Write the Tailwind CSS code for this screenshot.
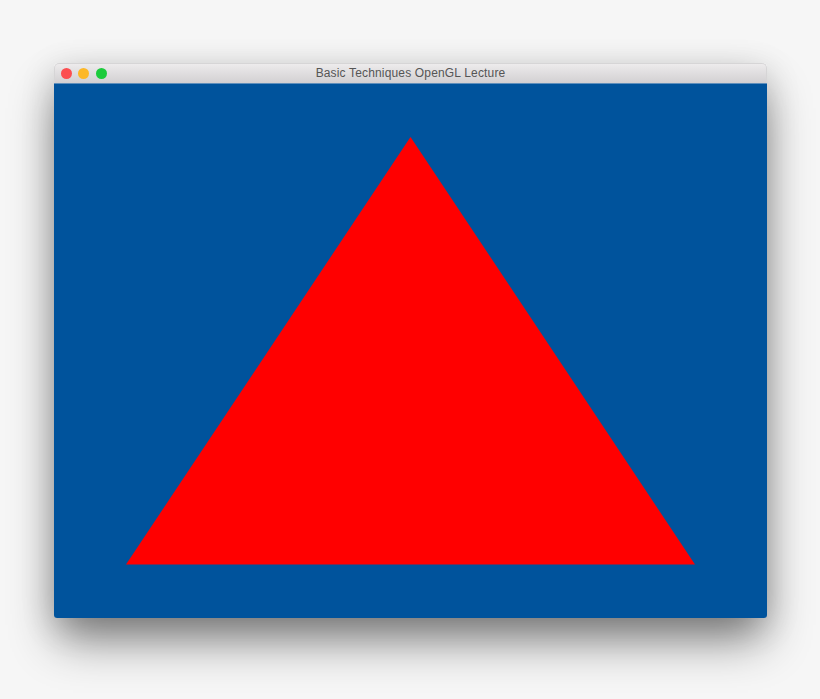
<!DOCTYPE html>
<html lang="en">
<head>
    <meta charset="UTF-8">
    <meta name="viewport" content="width=device-width, initial-scale=1.0">
    <title>Basic Techniques OpenGL Lecture</title>
    <script src="https://cdn.jsdelivr.net/npm/@tailwindcss/browser@4"></script>
</head>
<body class="bg-[#f6f6f6] h-[699px] w-[820px] overflow-hidden pt-[63px] pl-[54px]">
    <!-- Window -->
    <div class="w-[713px] h-[554.5px] rounded-[4px] flex flex-col shadow-[0_26px_44px_-4px_rgba(0,0,0,0.46),0_8px_34px_rgba(0,0,0,0.16)]">
        <!-- Title bar -->
        <div class="h-5 shrink-0 rounded-t-[5px] bg-gradient-to-b from-[#edebec] to-[#d2d0d2] border border-b-0 border-[#d6d5d6] flex items-center relative">
            <div class="flex items-center gap-[6.7px] pl-[5.8px] -mt-[0.5px]">
                <span class="w-[11px] h-[11px] rounded-full bg-[#fc4e50]"></span>
                <span class="w-[11px] h-[11px] rounded-full bg-[#fdb827]"></span>
                <span class="w-[11px] h-[11px] rounded-full bg-[#1ccb3c]"></span>
            </div>
            <div class="absolute inset-x-0 text-center text-[12px] leading-5 tracking-[0.16px] text-[#555] font-['Liberation_Sans',sans-serif] -mt-[0.5px]">Basic Techniques OpenGL Lecture</div>
        </div>
        <!-- GL canvas -->
        <div class="flex-1 bg-[#00539c] rounded-b-[3px] border-t border-[#5f8fbc]">
            <svg width="713" height="534" viewBox="0 1 713 534" class="block">
                <polygon points="356.5,54 72,481.5 641,481.5" fill="#ff0000"/>
            </svg>
        </div>
    </div>
</body>
</html>
